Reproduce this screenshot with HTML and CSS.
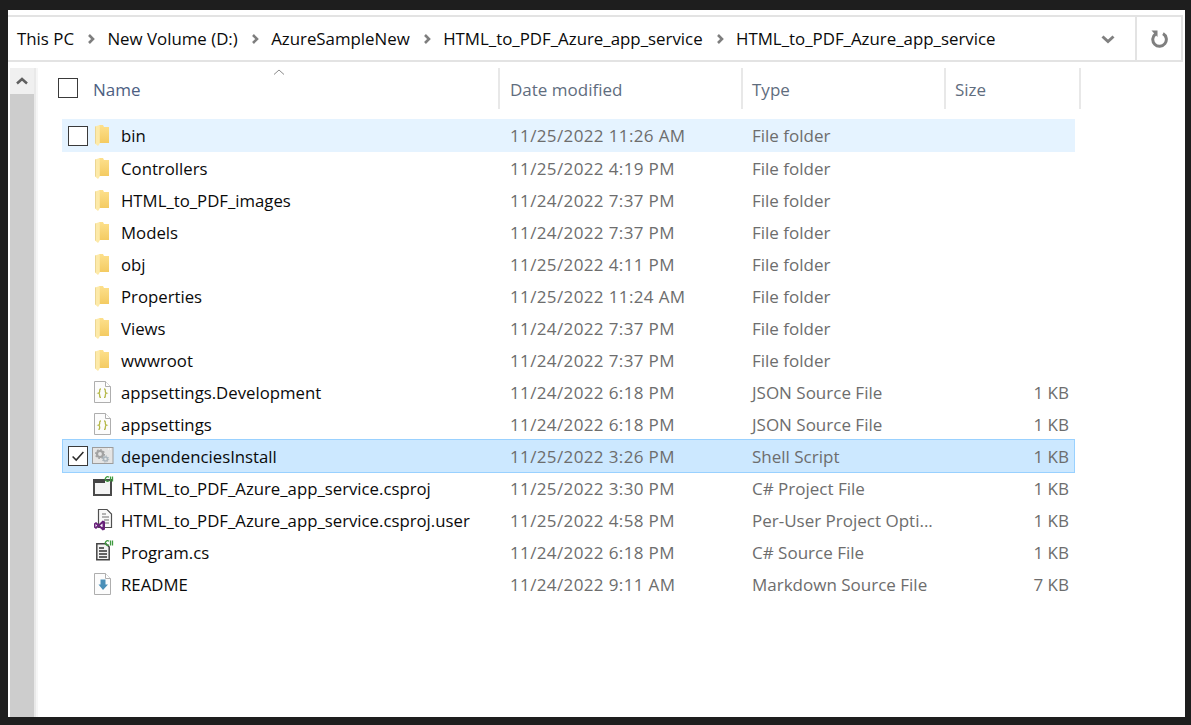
FILE: index.html
```html
<!DOCTYPE html>
<html lang="en">
<head>
<meta charset="utf-8">
<title>HTML_to_PDF_Azure_app_service</title>
<link rel="stylesheet" href="styles.css">
</head>
<body>
<svg class="defs" width="0" height="0" aria-hidden="true">
  <defs>
    <linearGradient id="fg" x1="0" y1="0" x2="0" y2="1"><stop offset="0" stop-color="#fde08c"/><stop offset="1" stop-color="#f4cb62"/></linearGradient>
    <symbol id="folder" viewBox="0 0 14 21">
      <path d="M4 0H8L9 2H14V18H4Z" fill="url(#fg)"/>
      <path d="M0 1.500L4.800 0V18.500L3 21L0 18.500Z" fill="#fdeaa9"/>
      <path d="M.5 1.500V18.500" stroke="#ecd692" stroke-width="1"/>
    </symbol>
    <symbol id="page" viewBox="0 0 17 22">
      <path d="M.5 .5H11.500L16.500 5.500V21.500H.5Z" fill="#fcfcfc" stroke="#aeaeae"/>
      <path d="M11.500 .5V5.500H16.500" fill="#fff" stroke="#aeaeae"/>
    </symbol>
  </defs>
</svg>
<main class="window">
  <header class="address">
    <nav class="crumbs">
      <span>This PC</span><svg class="sep" viewBox="0 0 8 12"><path d="M2 2l4 4-4 4" /></svg>
      <span>New Volume (D:)</span><svg class="sep" viewBox="0 0 8 12"><path d="M2 2l4 4-4 4" /></svg>
      <span>AzureSampleNew</span><svg class="sep" viewBox="0 0 8 12"><path d="M2 2l4 4-4 4" /></svg>
      <span>HTML_to_PDF_Azure_app_service</span><svg class="sep" viewBox="0 0 8 12"><path d="M2 2l4 4-4 4" /></svg>
      <span>HTML_to_PDF_Azure_app_service</span>
    </nav>
    <div class="drop"><svg viewBox="0 0 14 10"><path d="M1.500 2.500L7 7.500l5.500-5" /></svg></div>
    <div class="refresh"><svg viewBox="0 0 18 18"><path class="arc" d="M5.500 4A6.800 6.800 0 1 0 13 3.600" /><path class="head" d="M1.500 0.500H7.500V7Z" /></svg></div>
  </header>
  <div class="body">
    <aside class="scroll">
      <div class="up"><svg viewBox="0 0 12 8"><path d="M1 6.500L6 2l5 4.500" /></svg></div>
    </aside>
    <div class="strip"></div>
    <section class="files">
      <div class="head-row">
        <span class="box head-box"></span>
        <span class="h h-name">Name</span>
        <span class="h h-date">Date modified</span>
        <span class="h h-type">Type</span>
        <span class="h h-size">Size</span>
        <svg class="sort" viewBox="0 0 12 6"><path d="M1 5.500L6 1l5 4.500"/></svg>
      </div>
      <div class="list">
        <div class="row hover"><span class="box"></span><svg class="ico"><use href="#folder"/></svg><span class="n">bin</span><span class="d">11/25/2022 11:26 AM</span><span class="t">File folder</span><span class="s"></span></div>
        <div class="row"><span></span><svg class="ico"><use href="#folder"/></svg><span class="n">Controllers</span><span class="d">11/25/2022 4:19 PM</span><span class="t">File folder</span><span class="s"></span></div>
        <div class="row"><span></span><svg class="ico"><use href="#folder"/></svg><span class="n">HTML_to_PDF_images</span><span class="d">11/24/2022 7:37 PM</span><span class="t">File folder</span><span class="s"></span></div>
        <div class="row"><span></span><svg class="ico"><use href="#folder"/></svg><span class="n">Models</span><span class="d">11/24/2022 7:37 PM</span><span class="t">File folder</span><span class="s"></span></div>
        <div class="row"><span></span><svg class="ico"><use href="#folder"/></svg><span class="n">obj</span><span class="d">11/25/2022 4:11 PM</span><span class="t">File folder</span><span class="s"></span></div>
        <div class="row"><span></span><svg class="ico"><use href="#folder"/></svg><span class="n">Properties</span><span class="d">11/25/2022 11:24 AM</span><span class="t">File folder</span><span class="s"></span></div>
        <div class="row"><span></span><svg class="ico"><use href="#folder"/></svg><span class="n">Views</span><span class="d">11/24/2022 7:37 PM</span><span class="t">File folder</span><span class="s"></span></div>
        <div class="row"><span></span><svg class="ico"><use href="#folder"/></svg><span class="n">wwwroot</span><span class="d">11/24/2022 7:37 PM</span><span class="t">File folder</span><span class="s"></span></div>
        <div class="row"><span></span><svg class="ico doc" viewBox="0 0 17 22"><use href="#page" width="17" height="22"/><path class="brace" d="M7 8c-1.500 0-1.300 1-1.300 2.200s-.2 1.600-1.200 2c1 .3 1.200.8 1.200 2s-.2 2.200 1.300 2.200M10 8c1.500 0 1.300 1 1.300 2.200s.2 1.600 1.200 2c-1 .3-1.200.8-1.200 2s.2 2.200-1.300 2.200"/></svg><span class="n">appsettings.Development</span><span class="d">11/24/2022 6:18 PM</span><span class="t">JSON Source File</span><span class="s">1 KB</span></div>
        <div class="row"><span></span><svg class="ico doc" viewBox="0 0 17 22"><use href="#page" width="17" height="22"/><path class="brace" d="M7 8c-1.500 0-1.300 1-1.300 2.200s-.2 1.600-1.200 2c1 .3 1.200.8 1.200 2s-.2 2.200-1.300 2.200M10 8c1.500 0 1.300 1 1.300 2.200s.2 1.600 1.200 2c-1 .3-1.200.8-1.200 2s.2 2.200-1.300 2.200"/></svg><span class="n">appsettings</span><span class="d">11/24/2022 6:18 PM</span><span class="t">JSON Source File</span><span class="s">1 KB</span></div>
        <div class="row selected"><span class="box"><svg viewBox="0 0 20 20"><path d="M4 10.500l4 4 8-9"/></svg></span><svg class="ico wide" viewBox="0 0 22 24"><rect x=".5" y="3.500" width="20.500" height="16" fill="#e4e4e4" stroke="#9c9c9c"/><path d="M16 5h1M18 5h1" stroke="#fff"/><circle cx="8" cy="10" r="3" fill="none" stroke="#a2a2a2" stroke-width="2.200"/><circle cx="8" cy="10" r="4.400" fill="none" stroke="#a2a2a2" stroke-width="1.300" stroke-dasharray="1.700 1.700"/><circle cx="13.500" cy="15" r="2" fill="none" stroke="#a9b5bd" stroke-width="1.600"/><circle cx="13.500" cy="15" r="3.200" fill="none" stroke="#a9b5bd" stroke-width="1" stroke-dasharray="1.200 1.300"/></svg><span class="n">dependenciesInstall</span><span class="d">11/25/2022 3:26 PM</span><span class="t">Shell Script</span><span class="s">1 KB</span></div>
        <div class="row"><span></span><svg class="ico wide" viewBox="0 0 22 24"><rect x="2" y="4" width="17" height="15" fill="#f4f4f4" stroke="#4a4a4a" stroke-width="2"/><path d="M1 3h12v4H1z" fill="#444"/><path class="cs" d="M17 1.300a2.200 2.200 0 1 0 0 3.400M18.500 .5v5M20.500 .5v5"/></svg><span class="n">HTML_to_PDF_Azure_app_service.csproj</span><span class="d">11/25/2022 3:30 PM</span><span class="t">C# Project File</span><span class="s">1 KB</span></div>
        <div class="row"><span></span><svg class="ico wide" viewBox="0 0 22 24"><path d="M6.500 1.500H15L19.500 6V19.500H6.500Z" fill="#fafafa" stroke="#505050" stroke-width="1.200"/><path d="M10 6h4M10 9h7M12 12h5M13 15h4" stroke="#707070" stroke-width="1.200"/><path d="M2 15.500l2-1.500 2.700 2.200 4-3.700 2.300 1v8l-2.300 1-4-3.700-2.700 2.200-2-1.500z M3.500 16v3l1.600-1.500z M8 17.500l2.500 2v-4z" fill="#68217a" fill-rule="evenodd"/></svg><span class="n">HTML_to_PDF_Azure_app_service.csproj.user</span><span class="d">11/25/2022 4:58 PM</span><span class="t">Per-User Project Opti...</span><span class="s">1 KB</span></div>
        <div class="row"><span></span><svg class="ico wide" viewBox="0 0 22 24"><path d="M4.800 3.800H14L17.200 7V19.800H4.800Z" fill="#f2f2f2" stroke="#444" stroke-width="1.500"/><path d="M7 8h5M7 11h8M7 14h8M7 17h8" stroke="#333" stroke-width="1.400"/><path class="cs" d="M17 1.300a2.200 2.200 0 1 0 0 3.400M18.500 .5v5M20.500 .5v5"/></svg><span class="n">Program.cs</span><span class="d">11/24/2022 6:18 PM</span><span class="t">C# Source File</span><span class="s">1 KB</span></div>
        <div class="row"><span></span><svg class="ico doc" viewBox="0 0 17 22"><use href="#page" width="17" height="22"/><path d="M6.500 6.500h5v5h2.500L9 17 4.500 11.500h2z" fill="#4a8fb8"/></svg><span class="n">README</span><span class="d">11/24/2022 9:11 AM</span><span class="t">Markdown Source File</span><span class="s">7 KB</span></div>
      </div>
    </section>
  </div>
</main>
</body>
</html>
```

FILE: styles.css
```css
* { box-sizing: border-box; }
html, body { margin: 0; height: 100%; }
body {
  background: #1e1e1e;
  padding: 10px 6px 8px 8px;
  overflow: hidden;
  font-family: "Open Sans", "Noto Sans", sans-serif;
  font-size: 17px;
  color: #0a0a0a;
}
.defs { display: block; height: 0; }
.window {
  height: 707px;
  background: #fff;
  padding-top: 5px;
  display: flex;
  flex-direction: column;
}
.address {
  height: 47px;
  margin-right: 2px;
  border-top: 2px solid #e3e3e3;
  border-bottom: 2px solid #e3e3e3;
  display: flex;
  align-items: stretch;
  flex: none;
}
.crumbs {
  flex: 1;
  display: flex;
  align-items: center;
  padding-left: 9px;
  white-space: nowrap;
  font-size: 16.850px;
}
.sep { width: 8px; height: 12px; margin: 0 12.400px 0 13px; }
.sep path { fill: none; stroke: #7e7e7e; stroke-width: 2.600; }
.drop { width: 47px; display: flex; align-items: center; justify-content: center; padding-right: 7px; }
.drop svg { width: 14px; height: 10px; }
.drop path { fill: none; stroke: #808080; stroke-width: 3; }
.refresh {
  width: 48px;
  border-left: 2px solid #e3e3e3;
  border-right: 2px solid #e3e3e3;
  display: flex;
  align-items: center;
  justify-content: center;
}
.refresh svg { width: 18px; height: 18px; }
.arc { fill: none; stroke: #7f7f7f; stroke-width: 3; }
.head { fill: #7f7f7f; }
.body { flex: 1; display: flex; padding-top: 6px; min-height: 0; }
.scroll { width: 24px; margin-left: 2px; background: #cdcdcd; flex: none; }
.up { height: 26px; background: #f0f0f0; display: flex; align-items: center; justify-content: center; }
.up svg { width: 12px; height: 8px; }
.up path { fill: none; stroke: #606060; stroke-width: 2.500; }
.strip { width: 4px; flex: none; background: linear-gradient(90deg, #e9e9e9 50%, #f6f6f6 50%); }
.files { flex: 1; position: relative; }
.head-row { height: 41px; position: relative; display: grid; grid-template-columns: 462px 243px 203px 135px; }
.h {
  display: flex;
  align-items: center;
  color: #5f6d7e;
  font-size: 17px;
  border-right: 2px solid #e8e8e8;
  padding: 2px 0 0 10px;
}
.h-name { color: #4d6082; padding-left: 55px; }
.h-type, .h-size { padding-left: 9px; }
.head-box { position: absolute; left: 20px; top: 10px; }
.sort { position: absolute; left: 235px; top: 1px; width: 12px; height: 6px; }
.sort path { fill: none; stroke: #8a8a8a; }
.list { margin: 11px 0 0 24px; width: 1013px; }
.row {
  height: 32px;
  display: grid;
  grid-template-columns: 32px 26px 389px 242px 203px 114px;
  align-items: center;
  white-space: nowrap;
  border: 1px solid transparent;
  font-size: 16.750px;
}
.row.hover { background: #e5f3ff; border-color: #e5f3ff; height: 33px; margin-top: -1px; }
.row.selected { background: #cce8ff; border-color: #99d1ff; height: 34px; margin: -1px 0; }
.box { display: block; width: 20px; height: 20px; border: 1px solid #3a3a3a; background: #fff; margin-left: 5px; }
.head-box { margin-left: 0; }
.box svg { display: block; width: 18px; height: 18px; }
.box path { fill: none; stroke: #2b2b2b; stroke-width: 1.700; }
.ico { width: 14px; height: 21px; }
.ico.doc { width: 17px; height: 22px; margin-left: -1px; }
.ico.wide { width: 22px; height: 24px; margin-left: -3px; }
.brace { fill: none; stroke: #b5b84a; stroke-width: 1.300; }
.cs { fill: none; stroke: #3f9a3f; stroke-width: 1.300; }
.n { color: #0a0a0a; }
.d, .t, .s { color: #6d6d6d; font-size: 17px; }
.d { letter-spacing: .37px; }
.s { text-align: right; }
```
